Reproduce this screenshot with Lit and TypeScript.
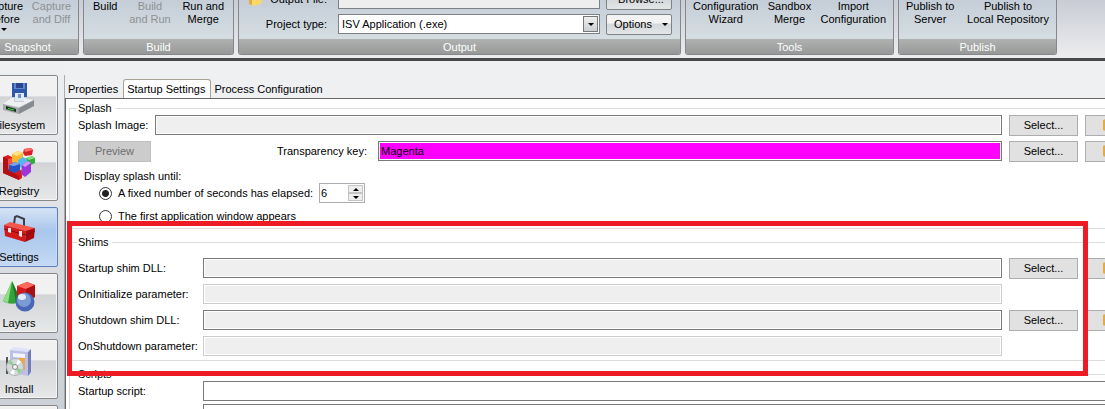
import { LitElement, html, css, svg } from "lit";
import { customElement, state } from "lit/decorators.js";

const icons: Record<string, unknown> = {
  Filesystem: svg`
    <path d="M10 1h15v15H10z" fill="#2f55a8"/><path d="M12 1h11v6H12z" fill="#5f86d0"/>
    <path d="M14 1h7v5h-7z" fill="#27468c"/><path d="M13 11h9v9h-9z" fill="#dfe9f8"/><path d="M16 12h3v4h-3z" fill="#6d8fc9"/>
    <path d="M1 22l8-7h4v4h9v-4h3l7 2v7l-16 8-15-5z" fill="#c9ccd0"/><path d="M1 22l8-6h3v4h10v-4l10 2-15 7z" fill="#eef0f2"/>
    <path d="M1 22l16 4v6L1 28z" fill="#a4a7ab"/><path d="M4 24l10 3v3L4 27z" fill="#17331a"/><path d="M6 26l6 1.500v1L6 27z" fill="#43e03f"/>
    <path d="M17 26l15-8v6l-15 8z" fill="#888b91"/>`,
  Registry: svg`
    <path d="M1 9l5-2 6 3v8l8 5v7l-3 2L1 25z" fill="#d91d1d"/><path d="M1 9l5 2v11l11 6v4L1 25z" fill="#b30f14"/><path d="M6 11l6-1v8l-6 3z" fill="#f4524c"/>
    <path d="M10 6l6-3 5 2v8l-6 3-5-2z" fill="#f5b72e"/><path d="M10 6l6-3 5 2-6 3z" fill="#ffe085"/>
    <path d="M22 1l7-1 2 2-1 5-7 1-2-3z" fill="#d81f26"/><path d="M22 1l7-1 2 2-8 2z" fill="#ff6b62"/>
    <path d="M24 10l6-2 3 2v5l-6 3-3-2z" fill="#2fae3c"/><path d="M24 10l6-2 3 2-6 2z" fill="#84e07e"/>
    <path d="M16 12l5-3 4 2v7l-5 2-4-2z" fill="#56b6f0"/><path d="M7 17l6-3 5 2v6l-5 3-6-2z" fill="#2453c4"/><path d="M7 17l6-3 5 2-6 2z" fill="#79a5f5"/>
    <path d="M20 17l6-4 3 2v9l-6 5-4-3z" fill="#9a35d8"/><path d="M20 17l6-4 3 2-6 4z" fill="#d295f7"/>`,
  Settings: svg`
    <path d="M12 10l1-7 2-1 7 3v7" fill="none" stroke="#3c4046" stroke-width="2"/>
    <path d="M2 11l6-3 25 6-2 5z" fill="#f4584c"/><path d="M2 11l22 6-1 11L3 22z" fill="#d41a18"/><path d="M24 17l9-3-1 10-9 4z" fill="#a50b0e"/>
    <path d="M2 15l22 6 9-4" fill="none" stroke="#8d090b"/><path d="M6 14h3v5l-3-1zM17 17h3v6l-3-1z" fill="#e7e9ec"/>`,
  Layers: svg`
    <path d="M10 1l9 20c-5 4-14 3-18 0z" fill="#35a33c"/><path d="M10 1L6 23 1 21z" fill="#8fdd84"/><path d="M10 1l9 20-5 2z" fill="#1c7a2a"/>
    <path d="M15 6l10-4 8 3v12l-8 4-10-5z" fill="#d3191c"/><path d="M15 6l10-4 8 3-9 4z" fill="#ff6a5c"/><path d="M24 9l9-4v12l-9 4z" fill="#a90e13"/>
    <circle cx="23" cy="22" r="9.500" fill="#4867b5"/><circle cx="22" cy="20" r="7" fill="#7d9ad6"/><ellipse cx="20" cy="17" rx="4" ry="3" fill="#e3ecfb"/>`,
  Install: svg`
    <path d="M8 4l4-3 17 2-3 3z" fill="#dfe2fa"/><path d="M8 4l18 2v24L8 26z" fill="#bcc0e6"/><path d="M26 6l3-3v23l-3 4z" fill="#777cb5"/>
    <path d="M11 7l12 1v4l-12-1z" fill="#f3f4ff"/><path d="M16 12h7v12h-7z" fill="#f0a93a"/><path d="M4 11h2v17H4z" fill="#555"/>
    <circle cx="13" cy="21" r="9" fill="#aeb6b8"/><circle cx="13" cy="21" r="8" fill="#d3d9d9"/><path d="M13 21L6 17l3-3zM13 21l7 3-3 4z" fill="#8ccf90"/><path d="M13 21l-5 6 4 2zM13 21l3-8 3 3z" fill="#fff"/>
    <circle cx="13" cy="21" r="2.500" fill="#f6f6f6" stroke="#888"/>`,
  Upload: svg`<path d="M6 6h20v20H6z" fill="#bcc0e6"/>`,
};

const folder = html`<svg class="folder" width="14" height="14" viewBox="0 0 14 14" aria-hidden="true">
  <path d="M0 2l5-2 2 2 5-1v9l-9 3-3-1z" fill="#e2ab3c"/><path d="M3 6l11-2-2 8-9 2z" fill="#ffd765"/></svg>`;

@customElement("ribbon-group")
class RibbonGroup extends LitElement {
  static properties = { label: {} };
  declare label: string;
  static styles = css`
    :host { display: flex; flex-direction: column; box-sizing: border-box; border: 1px solid #85888a; border-top: 0;
      border-radius: 0 0 3px 3px; background: linear-gradient(#c5ced8, #dbe3e5); overflow: hidden; }
    .body { flex: 1; display: flex; min-height: 0; }
    .name { height: 15px; line-height: 16px; text-align: center; color: #fff; background: linear-gradient(#b0b2b2, #979999); }
  `;
  render() {
    return html`<div class="body"><slot></slot></div><div class="name">${this.label}</div>`;
  }
}

@customElement("app-root")
class AppRoot extends LitElement {
  @state() section = "Settings";

  static styles = css`
    :host { display: flex; flex-direction: column; height: 100vh; overflow: hidden; background: #eff0f2;
      font: 11px/14px "Liberation Sans", Arial, sans-serif; color: #000; }
    * { box-sizing: border-box; }
    button, input, select { font: inherit; color: inherit; margin: 0; border-radius: 0; }
    .ribbon { flex: none; display: flex; gap: 4px; height: 61px; padding-bottom: 3px; overflow: hidden;
      background: linear-gradient(#c9ccd5, #ececee 56px); border-bottom: 3px solid #48494b; }
    .snapshot { flex: 0 0 103px; margin-left: -24px; }
    .build { flex: 0 0 151px; }
    .output { flex: 0 0 443px; }
    .tools { flex: 0 0 209px; }
    .publish { flex: 0 0 159px; }
    .items { flex: 1; display: flex; justify-content: space-between; align-items: flex-start; padding: 0 7px; }
    .build .items { padding: 0 9px; }
    .item { border: 0; background: none; padding: 0; line-height: 13px; text-align: center; white-space: pre-line; }
    .item:disabled { color: #8e9194; }
    .arrow { display: block; width: 0; margin: 2px auto 0; border: 3px solid transparent; border-top-color: #000; border-bottom: 0; }
    .output-form { flex: 1; display: grid; grid-template-columns: 14px 58px 1fr 66px; grid-auto-rows: 20px; gap: 5px 6px;
      align-items: center; padding: 0 8px 0 10px; margin-top: -11px; }
    .output-form label { text-align: right; white-space: nowrap; }
    .output-form .wide { grid-column: 1 / 3; }
    .control { position: relative; margin-left: 5px; height: 20px; }
    .control input, .control select { width: 100%; height: 20px; border: 1px solid #7d8084; background: #eee; padding: 0 3px; appearance: none; display: block; }
    .control select { background: #fff; }
    .drop { position: absolute; right: 2px; top: 2px; bottom: 2px; width: 15px; display: grid; place-items: center;
      border: 1px solid #777; background: linear-gradient(#eee, #ccd0d2); pointer-events: none; }
    .drop .arrow { margin: 0; }
    .push { height: 21px; border: 1px solid #808386; border-radius: 2px; padding: 0 3px 0 7px; display: flex; align-items: center;
      justify-content: space-between; background: linear-gradient(#f3f3f4 40%, #d4d8da 50%, #e3e6e7); }
    .push .arrow { margin: 0; }
    .push.center { justify-content: center; }

    .work { flex: 1; min-height: 0; display: flex; overflow: hidden; }
    nav { flex: 0 0 64px; min-width: 0; display: flex; flex-direction: column; gap: 6px; padding: 14px 6px 0 0; align-items: flex-end;
      background: linear-gradient(#eff0f2, #ccd0d7 330px); }
    .tile { flex: none; width: 78px; height: 60px; padding: 6px 0 0; border: 1px solid #85878a; border-radius: 2px;
      background: linear-gradient(#f1f1f2 34%, #d2d4d7 36%, #e6e8e9); display: flex; flex-direction: column; align-items: center;
      gap: 2px; box-shadow: inset 0 0 0 1px #f4f4f5; }
    .tile.on { border-color: #5a7fbb; background: linear-gradient(#d5e3f5, #a9c6ec 40%, #c5daf4); box-shadow: inset 0 0 0 1px #c7dcf6; }
    .tile svg { display: block; flex: none; }
    main { flex: 1; min-width: 0; display: flex; flex-direction: column; margin-top: 14px; border-left: 1px solid #a9adb3; }
    .tabs { flex: none; display: flex; align-items: flex-end; height: 23px; }
    .tab { border: 0; background: none; height: 19px; padding: 0 5px 0 3px; white-space: nowrap; }
    .tab.on { background: #fff; border: 1px solid #a5a294; border-bottom: 0; border-radius: 3px 3px 0 0; }
    .page { flex: 1; min-height: 0; border: 1px solid #66686a; border-width: 1px 0 0 1px; background: #fff; overflow: hidden; padding: 2px 0 0 3px; }
    fieldset { position: relative; min-width: 0; border: 1px solid #dcdcdc; margin: 0 -65px 6px 0; padding: 0 8px; }
    legend { height: 14px; padding: 0 3px 0 1px; margin-left: -1px; }
    .grid { display: grid; gap: 6px 7px; align-items: center; grid-auto-rows: 20px; white-space: nowrap; }
    .splash { grid-template-columns: 70px 1fr 69px 76px; }
    .shims { grid-template-columns: 118px 1fr 69px 76px; padding: 9px 0 4px; }
    .scripts { grid-template-columns: 118px 1fr; row-gap: 3px; }
    .first { grid-column: 1; }
    .field { width: 100%; min-width: 0; height: 20px; border: 1px solid #7a7a7a; padding: 0 3px; background: #efefef; box-shadow: inset 0 0 0 1px #fff; outline: 0; }
    .field:disabled { border-color: #ccc; }
    .field.edit { background: #fff; }
    .field.magenta { background: #f0f; flex: 1; padding: 0 2px; }
    .btn { height: 21px; border: 1px solid #adadad; background: #e1e1e1; padding: 0; }
    .btn:disabled { color: #6d6d6d; background: #ccc; border-color: #bfbfbf; }
    .more { padding-left: 17px; text-align: left; }
    .more svg { display: block; }
    .key { grid-column: 1 / 3; display: flex; gap: 7px; align-items: center; }
    .preview { flex: 0 0 73px; }
    .key label { flex: 0 0 213px; text-align: right; padding-right: 4px; }
    .until { padding: 8px 0 2px 6px; }
    .choice { display: flex; align-items: center; height: 20px; margin-left: 15px; gap: 6px; }
    .choice + .choice { margin-top: 3px; }
    .radio { appearance: none; flex: none; width: 13px; height: 13px; border: 1px solid #333; border-radius: 50%; background: #fff; }
    .radio:checked { background: radial-gradient(circle, #222 3px, #fff 4px); }
    .spin { display: flex; width: 46px; height: 20px; border: 1px solid #abadb3; padding: 1px; }
    .spin input { flex: 1; width: 0; border: 0; padding: 0; appearance: textfield; outline: 0; }
    .spin input::-webkit-inner-spin-button { display: none; }
    .steps { display: grid; width: 15px; grid-template-rows: 1fr 1fr; }
    .step { border: 1px solid #c4c4c4; background: #eee; padding: 0; display: grid; place-items: center; min-height: 0; }
    .step .arrow { margin: 0; }
    .step .up { transform: rotate(180deg); }
    .mark { position: absolute; z-index: 1; left: -3px; right: 81px; top: -28px; bottom: -16px; border: 5px solid #ed1c24; pointer-events: none; }
  `;

  item(text: string, disabled = false, menu = false) {
    return html`<button class="item" ?disabled=${disabled}>${text}${menu ? html`<i class="arrow"></i>` : ""}</button>`;
  }

  pick() {
    return html`<button class="btn">Select...</button><button class="btn more" aria-label="Open">${folder}</button>`;
  }

  shim(id: string, label: string, path: boolean) {
    return html`<label class="first" for=${id}>${label}</label>
      <input class="field" id=${id} ?readonly=${path} ?disabled=${!path} />${path ? this.pick() : ""}`;
  }

  render() {
    return html`
      <header class="ribbon">
        <ribbon-group class="snapshot" label="Snapshot"><div class="items">
          ${this.item("Capture\nBefore", false, true)}${this.item("Capture\nand Diff", true)}
        </div></ribbon-group>
        <ribbon-group class="build" label="Build"><div class="items">
          ${this.item("Build")}${this.item("Build\nand Run", true)}${this.item("Run and\nMerge")}
        </div></ribbon-group>
        <ribbon-group class="output" label="Output"><div class="output-form">
          ${folder}<label for="file">Output File:</label>
          <div class="control"><input id="file" readonly /></div>
          <button class="push center">Browse...</button>
          <label class="wide" for="type">Project type:</label>
          <div class="control"><select id="type"><option>ISV Application (.exe)</option></select><span class="drop"><i class="arrow"></i></span></div>
          <button class="push">Options<i class="arrow"></i></button>
        </div></ribbon-group>
        <ribbon-group class="tools" label="Tools"><div class="items">
          ${this.item("Configuration\nWizard")}${this.item("Sandbox\nMerge")}${this.item("Import\nConfiguration")}
        </div></ribbon-group>
        <ribbon-group class="publish" label="Publish"><div class="items">
          ${this.item("Publish to\nServer")}${this.item("Publish to\nLocal Repository")}
        </div></ribbon-group>
      </header>
      <div class="work">
        <nav>
          ${Object.keys(icons).map((name) => html`
            <button class="tile ${name === this.section ? "on" : ""}" @click=${() => (this.section = name)}>
              <svg width="34" height="34" viewBox="0 0 34 34" aria-hidden="true">${icons[name]}</svg>${name}
            </button>`)}
        </nav>
        <main>
          <div class="tabs">
            <button class="tab">Properties</button><button class="tab on">Startup Settings</button><button class="tab">Process Configuration</button>
          </div>
          <div class="page">
            <fieldset>
              <legend>Splash</legend>
              <div class="grid splash">
                <label for="image">Splash Image:</label><input class="field" id="image" readonly />${this.pick()}
                <div class="key">
                  <button class="btn preview" disabled>Preview</button>
                  <label for="key">Transparency key:</label>
                  <input class="field magenta" id="key" value="Magenta" />
                </div>${this.pick()}
              </div>
              <div class="until">
                Display splash until:
                <div class="choice">
                  <input class="radio" type="radio" name="until" id="fixed" checked /><label for="fixed">A fixed number of seconds has elapsed:</label>
                  <div class="spin"><input type="number" value="6" aria-label="Seconds" />
                    <div class="steps">
                      <button class="step" aria-label="Increase"><i class="arrow up"></i></button>
                      <button class="step" aria-label="Decrease"><i class="arrow"></i></button>
                    </div>
                  </div>
                </div>
                <div class="choice">
                  <input class="radio" type="radio" name="until" id="window" /><label for="window">The first application window appears</label>
                </div>
              </div>
            </fieldset>
            <fieldset>
              <legend>Shims</legend>
              <div class="grid shims">
                ${this.shim("startup", "Startup shim DLL:", true)}
                ${this.shim("oninit", "OnInitialize parameter:", false)}
                ${this.shim("shutdown", "Shutdown shim DLL:", true)}
                ${this.shim("onshut", "OnShutdown parameter:", false)}
              </div>
              <div class="mark"></div>
            </fieldset>
            <fieldset>
              <legend>Scripts</legend>
              <div class="grid scripts">
                <label for="script">Startup script:</label><input class="field edit" id="script" />
                <label for="script2">Shutdown script:</label><input class="field edit" id="script2" />
              </div>
            </fieldset>
          </div>
        </main>
      </div>`;
  }
}
